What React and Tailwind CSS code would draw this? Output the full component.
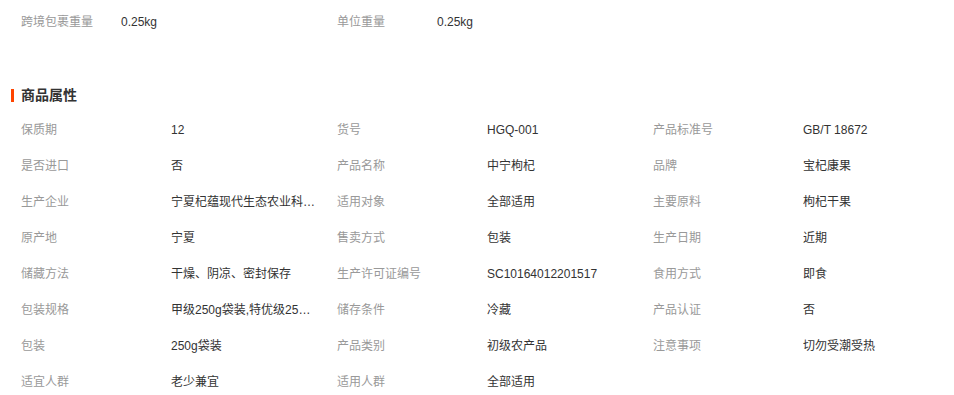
import React from "react";

const rows = [
  ["保质期", "12", "货号", "HGQ-001", "产品标准号", "GB/T 18672"],
  ["是否进口", "否", "产品名称", "中宁枸杞", "品牌", "宝杞康果"],
  ["生产企业", "宁夏杞蕴现代生态农业科技有限公司", "适用对象", "全部适用", "主要原料", "枸杞干果"],
  ["原产地", "宁夏", "售卖方式", "包装", "生产日期", "近期"],
  ["储藏方法", "干燥、阴凉、密封保存", "生产许可证编号", "SC10164012201517", "食用方式", "即食"],
  ["包装规格", "甲级250g袋装,特优级250g袋装", "储存条件", "冷藏", "产品认证", "否"],
  ["包装", "250g袋装", "产品类别", "初级农产品", "注意事项", "切勿受潮受热"],
  ["适宜人群", "老少兼宜", "适用人群", "全部适用"],
];

export default function App() {
  const cells = [];
  rows.forEach((r, i) => {
    for (let j = 0; j < r.length; j += 2) {
      cells.push(
        <div key={`${i}-${j}`} className="flex h-9 items-center">
          <div className="w-[150px] shrink-0 text-[#999]">{r[j]}</div>
          <div className="w-[146px] truncate text-[#333]">{r[j + 1]}</div>
        </div>
      );
    }
    for (let k = r.length; k < 6; k += 2) {
      cells.push(<div key={`${i}-e${k}`} className="h-9" />);
    }
  });

  return (
    <div
      className="w-[954px] h-[395px] bg-white text-[12px] overflow-hidden"
      style={{ fontFamily: '"Liberation Sans", "Noto Sans CJK SC", sans-serif' }}
    >
      <div className="pt-[4px] pl-[21px] flex">
        <div className="flex h-9 items-center w-[316px]">
          <div className="w-[100px] shrink-0 text-[#999]">跨境包裹重量</div>
          <div className="text-[#333]">0.25kg</div>
        </div>
        <div className="flex h-9 items-center w-[316px]">
          <div className="w-[100px] shrink-0 text-[#999]">单位重量</div>
          <div className="text-[#333]">0.25kg</div>
        </div>
      </div>
      <div className="mt-[45px] h-5 flex items-center pl-[11px]">
        <div className="w-[3px] h-[13px] bg-[#ff4400]" />
        <div className="ml-[7px] text-[14px] font-bold text-[#333]">商品属性</div>
      </div>
      <div className="mt-[7px] pl-[21px] grid grid-cols-[repeat(3,316px)]">
        {cells}
      </div>
    </div>
  );
}
